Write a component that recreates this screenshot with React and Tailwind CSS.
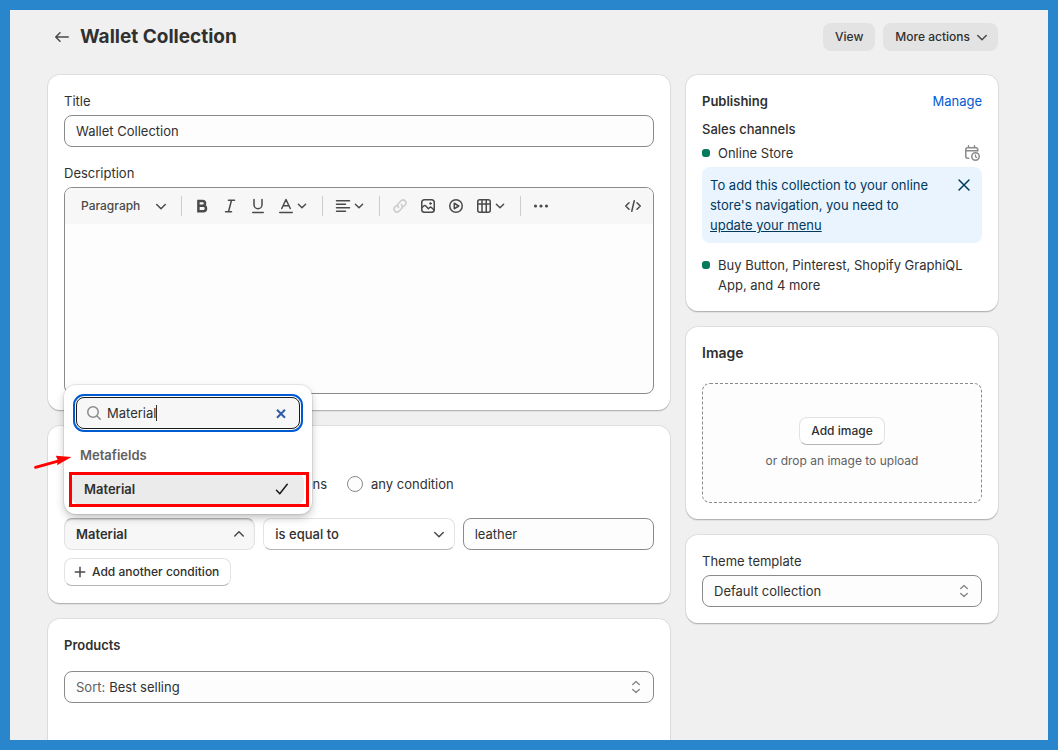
import React from 'react'
import clsx from 'clsx'

const card =
  'rounded-xl bg-white p-4 shadow-[0_0_0_1px_rgba(0,0,0,0.07),0_1px_1px_0_rgba(0,0,0,0.16),0_3px_1px_-1px_rgba(0,0,0,0.05)]'
const field = 'h-8 w-full rounded-lg border border-[#8a8a8a] bg-[#fdfdfd]'
const raised =
  'rounded-lg border border-[#e3e3e3] border-b-[#b5b5b5] bg-white font-[550]'

function Icon({ size = 20, className, children }) {
  return (
    <svg
      viewBox="0 0 20 20"
      width={size}
      height={size}
      fill="none"
      stroke="currentColor"
      strokeWidth="1.5"
      strokeLinecap="round"
      strokeLinejoin="round"
      className={clsx('shrink-0', className)}
      aria-hidden="true"
    >
      {children}
    </svg>
  )
}

function ChevronDown({ className }) {
  return (
    <Icon className={clsx('text-[#4a4a4a]', className)}>
      <path d="m5.75 8.5 4.25 4.25 4.25-4.25" />
    </Icon>
  )
}

function UpDown({ className }) {
  return (
    <Icon className={className}>
      <path d="m6.75 7.5 3.25-3 3.25 3M6.75 12.5l3.25 3 3.25-3" />
    </Icon>
  )
}

function Divider() {
  return <span className="h-5 w-px bg-[#cccccc]" />
}

function Tool({ label, children, menu, disabled }) {
  return (
    <button
      type="button"
      aria-label={label}
      disabled={disabled}
      className="flex items-center disabled:text-[#cccccc]"
    >
      <Icon>{children}</Icon>
      {menu && (
        <Icon size={12}>
          <path strokeWidth="2.4" d="m4 7 6 6 6-6" />
        </Icon>
      )}
    </button>
  )
}

function Toolbar() {
  return (
    <div className="flex h-9 items-center rounded-t-[7px] bg-[#f7f7f7] pr-2.5 pl-4 text-[#4a4a4a]">
      <button type="button" className="flex items-center text-[12px] font-medium">
        <span className="w-[70px] text-left">Paragraph</span>
        <ChevronDown />
      </button>
      <div className="ml-2.5 flex items-center gap-2">
        <Divider />
        <div className="ml-0.5 flex items-center gap-2">
          <Tool label="Bold">
            <path
              strokeWidth="2.5"
              strokeLinejoin="miter"
              d="M6.4 4.9h4.2a2.4 2.4 0 0 1 0 4.9H6.4zM6.4 9.8h4.9a2.7 2.7 0 0 1 0 5.4H6.4z"
            />
          </Tool>
          <Tool label="Italic">
            <path d="M8.5 4.25h6M5.5 15.75h6M11.5 4.25l-3 11.5" />
          </Tool>
          <Tool label="Underline">
            <path d="M6 3.5v5.25a4 4 0 0 0 8 0V3.5M4.75 16.5h10.5" />
          </Tool>
          <Tool label="Text color" menu>
            <path d="M5.75 12.5 10 3.5l4.25 9M7.25 9.75h5.5M3.75 16.5h12.5" />
          </Tool>
        </div>
      </div>
      <div className="ml-3.5 flex items-center gap-2.5">
        <Divider />
        <Tool label="Alignment" menu>
          <path d="M3.5 4.75h13M3.5 8.25h9M3.5 11.75h13M3.5 15.25h9" />
        </Tool>
      </div>
      <div className="ml-3.5 flex items-center gap-2.5">
        <Divider />
        <div className="flex items-center gap-2">
          <Tool label="Link" disabled>
            <path d="m8.6 11.4a3 3 0 0 1 0-4.2l2.6-2.6a3 3 0 0 1 4.2 4.2l-1.6 1.6M11.4 8.6a3 3 0 0 1 0 4.2l-2.6 2.6a3 3 0 0 1-4.2-4.2l1.6-1.6" />
          </Tool>
          <Tool label="Image">
            <rect x="3.75" y="3.75" width="12.5" height="12.5" rx="2.75" />
            <path d="m4 11.5 2-1.75a1.2 1.2 0 0 1 1.6.05l2.8 3 1.4-1.3a1.2 1.2 0 0 1 1.6 0l2.6 2.5" />
            <circle cx="12.5" cy="7.5" r="0.9" fill="currentColor" strokeWidth="0.8" />
          </Tool>
          <Tool label="Video">
            <circle cx="10" cy="10" r="6.25" />
            <path d="M8.25 7.25v5.5L12.75 10z" />
          </Tool>
          <Tool label="Table" menu>
            <rect x="3.75" y="3.75" width="12.5" height="12.5" rx="2" />
            <path d="M3.75 8h12.5M8 3.75v12.5M12.25 3.75v12.5" />
          </Tool>
        </div>
      </div>
      <div className="ml-3.5 flex items-center gap-2.5">
        <Divider />
        <Tool label="More">
          <g fill="currentColor" stroke="none">
            <circle cx="4.5" cy="10" r="1.6" />
            <circle cx="10" cy="10" r="1.6" />
            <circle cx="15.5" cy="10" r="1.6" />
          </g>
        </Tool>
      </div>
      <div className="ml-auto">
        <Tool label="Show HTML">
          <path d="M6 6.75 2.75 10 6 13.25M14 6.75 17.25 10 14 13.25M11.25 4.75l-2.5 10.5" />
        </Tool>
      </div>
    </div>
  )
}

function DetailsCard() {
  return (
    <section className={card}>
      <label htmlFor="title" className="block">Title</label>
      <input
        id="title"
        defaultValue="Wallet Collection"
        className={clsx(field, 'mt-1 px-[11px]')}
      />
      <label htmlFor="description" className="mt-4 block">Description</label>
      <div className="mt-1 rounded-lg border border-[#8a8a8a] bg-[#fdfdfd]">
        <Toolbar />
        <textarea
          id="description"
          className="block h-[169px] w-full resize-none bg-transparent px-3 py-2 outline-none"
        />
      </div>
    </section>
  )
}

function FieldPopover() {
  return (
    <div className="absolute bottom-full left-0 z-10 mb-1 w-62 rounded-xl bg-white pt-3 pb-[9px] shadow-[0_0_0_1px_rgba(0,0,0,0.07),0_4px_10px_-1px_rgba(0,0,0,0.28)]">
      <div className="mx-3 flex h-8 items-center rounded-lg border border-[#1a1a1a] bg-[#f7f7f7] pr-2.5 pl-[7px] outline-2 outline-offset-1 outline-[#005bd3]">
        <Icon className="text-[#8a8a8a]">
          <circle cx="9" cy="9" r="5.25" />
          <path d="m13 13 3.25 3.25" />
        </Icon>
        <input
          aria-label="Search fields"
          defaultValue="Material"
          className="ml-[3px] field-sizing-content outline-none"
        />
        <span className="h-4 w-px bg-[#303030]" />
        <button type="button" aria-label="Clear" className="ml-auto text-[#2f5ba8]">
          <Icon size={16}>
            <path strokeWidth="2.5" strokeLinecap="butt" d="m5 6 10 10M15 6 5 16" />
          </Icon>
        </button>
      </div>
      <p className="mt-4 px-4 font-semibold text-[#616161]">Metafields</p>
      <div className="relative mx-2 mt-2">
        <button
          type="button"
          className="flex h-8 w-full items-center justify-between rounded-lg bg-[#ebebeb] pr-3 pl-3 font-semibold"
        >
          Material
          <Icon className="text-[#1a1a1a]">
            <path d="m4.5 11.25 3.25 3.5 7.5-9.5" />
          </Icon>
        </button>
        <span className="absolute -top-px -right-[5px] -bottom-0.5 -left-[3px] border-3 border-[#ff0000]" />
        <svg
          viewBox="0 0 40 18"
          className="absolute -top-5 right-full h-[18px] w-10"
          fill="#ff0000"
          aria-hidden="true"
        >
          <path d="M3.5 14.3 26 8.2" stroke="#ff0000" strokeWidth="2.8" strokeLinecap="round" />
          <path d="M39.5 4 23.8 2.8l2.2 4.7-1 4.8z" />
        </svg>
      </div>
    </div>
  )
}

function ConditionsCard() {
  return (
    <section className={clsx(card, 'pt-12 pb-[17px]')}>
      <div className="flex h-5 items-center gap-5 pl-[158px]">
        <label className="flex items-center gap-2">
          <input
            type="radio"
            name="match"
            defaultChecked
            className="size-4 appearance-none rounded-full border-[5px] border-[#303030] bg-white"
          />
          all conditions
        </label>
        <label className="flex items-center gap-2">
          <input
            type="radio"
            name="match"
            className="size-4 appearance-none rounded-full border border-[#8a8a8a] bg-[#fdfdfd]"
          />
          any condition
        </label>
      </div>
      <div className="mt-6 grid grid-cols-3 gap-2">
        <div className="relative">
          <button
            type="button"
            aria-expanded="true"
            className="flex h-8 w-full items-center justify-between rounded-lg border border-[#e3e3e3] border-t-[#b5b5b5] bg-[#f7f7f7] pr-[5px] pl-[11px] font-semibold shadow-[inset_0_1px_1px_rgba(0,0,0,0.12)]"
          >
            Material
            <Icon className="text-[#4a4a4a]">
              <path d="M5.75 12 10 7.75 14.25 12" />
            </Icon>
          </button>
          <FieldPopover />
        </div>
        <div className="relative">
          <select
            aria-label="Operator"
            className={clsx(raised, 'h-8 w-full appearance-none px-[11px]')}
          >
            <option>is equal to</option>
          </select>
          <ChevronDown className="pointer-events-none absolute top-1.5 right-1.5" />
        </div>
        <input
          aria-label="Value"
          defaultValue="leather"
          className={clsx(field, 'px-[11px]')}
        />
      </div>
      <button
        type="button"
        className={clsx(raised, 'mt-2 flex h-7 items-center gap-0.5 pr-[11px] pl-[5px] text-[12px]')}
      >
        <Icon className="text-[#4a4a4a]">
          <path d="M10 5.25v9.5M5.25 10h9.5" />
        </Icon>
        Add another condition
      </button>
    </section>
  )
}

function ProductsCard() {
  return (
    <section className={clsx(card, 'h-50')}>
      <h2 className="font-semibold">Products</h2>
      <div className={clsx(field, 'relative mt-4 flex items-center gap-1 pl-[11px]')}>
        <label htmlFor="sort" className="text-[#616161]">Sort:</label>
        <select id="sort" className="h-full flex-1 appearance-none bg-transparent">
          <option>Best selling</option>
        </select>
        <UpDown className="pointer-events-none absolute top-[5px] right-[7px] text-[#8a8a8a]" />
      </div>
    </section>
  )
}

function PublishingCard() {
  return (
    <section className={card}>
      <div className="flex justify-between">
        <h2 className="font-semibold">Publishing</h2>
        <a href="#manage" className="text-[#005bd3]">Manage</a>
      </div>
      <h3 className="mt-2 font-[550]">Sales channels</h3>
      <div className="mt-1 flex items-center">
        <span className="mr-2 size-2 rounded-[3px] bg-[#047b5d]" />
        Online Store
        <button type="button" aria-label="Schedule" className="ml-auto text-[#8a8a8a]">
          <Icon>
            <path d="M6.5 2.75v2M12.5 2.75v2M15.75 8V6.75a2 2 0 0 0-2-2h-8a2 2 0 0 0-2 2v6.5a2 2 0 0 0 2 2h1M3.75 7.75h11.5" />
            <circle cx="13.5" cy="13.5" r="3.75" />
            <path d="M13.5 11.75v2l1.25.75" strokeWidth="1.2" />
          </Icon>
        </button>
      </div>
      <div className="mt-1 flex items-start rounded-lg bg-[#eaf4ff] py-2 pr-2 pl-2 text-[#00395c]">
        <p className="flex-1 pr-2">
          To add this collection to your online store's navigation, you need to{' '}
          <a href="#menu" className="inline-block underline">update your menu</a>
        </p>
        <button type="button" aria-label="Dismiss">
          <Icon>
            <path d="m5 5 10 10M15 5 5 15" />
          </Icon>
        </button>
      </div>
      <div className="mt-3 flex items-start">
        <span className="mt-1.5 mr-2 size-2 shrink-0 rounded-[3px] bg-[#047b5d]" />
        <p>Buy Button, Pinterest, Shopify GraphiQL App, and 4 more</p>
      </div>
    </section>
  )
}

function ImageCard() {
  return (
    <section className={card}>
      <h2 className="text-[14px] leading-5 font-semibold">Image</h2>
      <div className="mt-5 flex h-30 flex-col items-center justify-center gap-1.5 rounded-lg border border-dashed border-[#8a8a8a] bg-[#fdfdfd] pt-0.5">
        <button type="button" className={clsx(raised, 'h-7 px-[11px] text-[12px]')}>
          Add image
        </button>
        <p className="text-[12px] text-[#616161]">or drop an image to upload</p>
      </div>
    </section>
  )
}

function ThemeCard() {
  return (
    <section className={card}>
      <label htmlFor="template" className="block">Theme template</label>
      <div className="relative mt-1">
        <select id="template" className={clsx(field, 'appearance-none px-[11px]')}>
          <option>Default collection</option>
        </select>
        <UpDown className="pointer-events-none absolute top-1.5 right-2 text-[#8a8a8a]" />
      </div>
    </section>
  )
}

export default function App() {
  return (
    <div className="h-screen overflow-hidden border-10 border-[#2986cc] bg-[#f0f0f0] pt-[13px] pr-[50px] pl-[38px] font-['Inter',sans-serif] text-[13px] leading-5 text-[#303030]">
      <header className="flex h-7 items-center gap-2">
        <a href="#collections" aria-label="Back" className="ml-1 text-[#4a4a4a]">
          <Icon>
            <path d="M16.25 10H4M8 5.75 3.75 10 8 14.25" />
          </Icon>
        </a>
        <h1 className="text-[19px] leading-6 font-bold">Wallet Collection</h1>
        <button
          type="button"
          className="ml-auto h-7 rounded-lg bg-[#e3e3e3] px-3 text-[12px] font-[550]"
        >
          View
        </button>
        <button
          type="button"
          className="flex h-7 items-center gap-0.5 rounded-lg bg-[#e3e3e3] pr-1.5 pl-3 text-[12px] font-[550]"
        >
          More actions
          <ChevronDown />
        </button>
      </header>
      <main className="mt-6 grid grid-cols-[minmax(0,1fr)_312px] items-start gap-4">
        <div className="flex flex-col gap-4">
          <DetailsCard />
          <ConditionsCard />
          <ProductsCard />
        </div>
        <div className="flex flex-col gap-4">
          <PublishingCard />
          <ImageCard />
          <ThemeCard />
        </div>
      </main>
    </div>
  )
}
